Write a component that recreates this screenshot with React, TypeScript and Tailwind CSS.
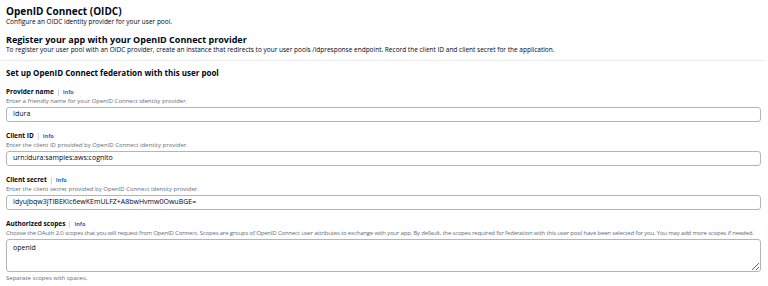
import React from "react";

const font = { fontFamily: '"Open Sans", "Noto Sans", sans-serif' };

function Label({ text }: { text: string }) {
  return (
    <div className="flex items-center h-[9px] leading-none">
      <span className="text-[6.5px] font-bold text-[#000716]">{text}</span>
      <span className="mx-[4px] h-[7px] w-px bg-[#d1d5db]" />
      <span className="text-[5.5px] font-bold text-[#0972d3]">Info</span>
    </div>
  );
}

function Field({ label, helper, value }: { label: string; helper: string; value: string }) {
  return (
    <div className="flex flex-col">
      <Label text={label} />
      <div className="text-[6px] leading-[8px] text-[#5f6b7a]">{helper}</div>
      <div className="mt-[2px] h-[15px] rounded-[3px] border border-[#b4b4bb] flex items-center px-[6px] text-[7px] text-[#000716]">
        {value}
      </div>
    </div>
  );
}

export default function App() {
  return (
    <div className="w-[768px] h-[286px] bg-white overflow-hidden text-[#000716]" style={font}>
      <div className="pl-[6px] pr-[7px] pt-[5px]">
        <div className="text-[10px] font-bold leading-[13px]">OpenID Connect (OIDC)</div>
        <div className="text-[6.5px] leading-[8px] text-[#000716]">Configure an OIDC identity provider for your user pool.</div>
        <div className="mt-[8px] text-[9px] font-bold leading-[12px]">Register your app with your OpenID Connect provider</div>
        <div className="text-[6.5px] leading-[8px]">
          To register your user pool with an OIDC provider, create an instance that redirects to your user pools /idpresponse endpoint. Record the client ID and client secret for the application.
        </div>
      </div>
      <div className="mt-[6px] mr-[3px] h-px bg-[#e9ebed]" />
      <div className="pl-[6px] pr-[7px] pt-[6px]">
        <div className="text-[8px] font-bold leading-[12px]">Set up OpenID Connect federation with this user pool</div>
        <div className="mt-[9px] flex flex-col gap-[10px]">
          <Field
            label="Provider name"
            helper="Enter a friendly name for your OpenID Connect identity provider."
            value="Idura"
          />
          <Field
            label="Client ID"
            helper="Enter the client ID provided by OpenID Connect identity provider."
            value="urn:idura:samples:aws:cognito"
          />
          <Field
            label="Client secret"
            helper="Enter the client secret provided by OpenID Connect identity provider."
            value="Idyujbqw3jTIBEKIc6ewKEmULFZ+A8bwHvmw0OwuBGE="
          />
          <div className="flex flex-col">
            <Label text="Authorized scopes" />
            <div className="text-[6px] leading-[8px] tracking-[-0.18px] text-[#5f6b7a] whitespace-nowrap">
              Choose the OAuth 2.0 scopes that you will request from OpenID Connect. Scopes are groups of OpenID Connect user attributes to exchange with your app. By default, the scopes required for federation with this user pool have been selected for you. You may add more scopes if needed.
            </div>
            <textarea
              className="mt-[2px] h-[33px] rounded-[3px] border border-[#b4b4bb] px-[6px] py-[3px] text-[7px] leading-[9px] text-[#000716] outline-none"
              style={font}
              defaultValue="openid"
            />
            <div className="mt-[2px] text-[6px] leading-[8px] text-[#5f6b7a]">Separate scopes with spaces.</div>
          </div>
        </div>
      </div>
    </div>
  );
}
